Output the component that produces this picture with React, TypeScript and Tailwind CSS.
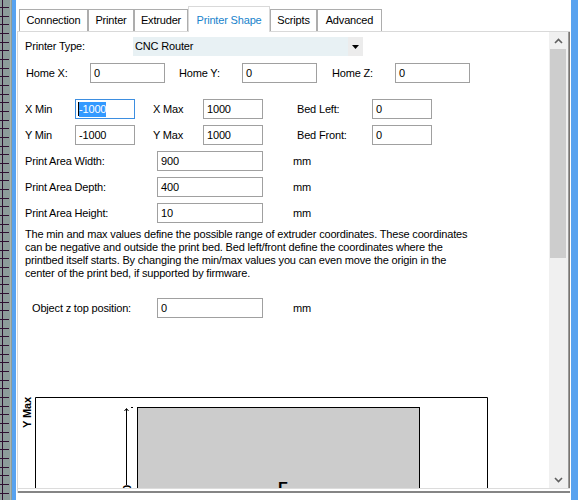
import React from 'react';

// Printer settings dialog, "Printer Shape" tab

const TABS = [
  { label: 'Connection', w: 'w-[69px]' },
  { label: 'Printer', w: 'w-[46px]' },
  { label: 'Extruder', w: 'w-[54px]' },
  { label: 'Printer Shape', w: 'w-[82px]', active: true },
  { label: 'Scripts', w: 'w-[47px]' },
  { label: 'Advanced', w: 'w-[65px]' },
];

const DESCRIPTION = [
  'The min and max values define the possible range of extruder coordinates. These coordinates',
  'can be negative and outside the print bed. Bed left/front define the coordinates where the',
  'printbed itself starts. By changing the min/max values you can even move the origin in the',
  'center of the print bed, if supported by firmware.',
];

function GridStrip() {
  const rows = Array.from({ length: 58 }, (_, i) => Math.round(7 + i * 8.67) + 0.5);
  return (
    <svg width="12" height="500" className="shrink-0 block">
      <rect width="12" height="500" fill="#8d9d9b" />
      <line x1="2.5" y1="0" x2="2.5" y2="500" stroke="#2e1030" />
      {rows.map((y) => (
        <line key={y} x1="0" y1={y} x2="9" y2={y} stroke="#2e1030" />
      ))}
      <line x1="10.5" y1="0" x2="10.5" y2="500" stroke="#a9b6b4" />
    </svg>
  );
}

function Input({ width, value }: { width: string; value: string }) {
  return (
    <div className={`${width} h-[20px] shrink-0 border border-[#a0a0a0] bg-white pl-[3px] flex items-center`}>
      {value}
    </div>
  );
}

function Label({ width, children }: { width: string; children: React.ReactNode }) {
  return <div className={`${width} shrink-0`}>{children}</div>;
}

function ScrollBar() {
  return (
    <div className="w-[18px] shrink-0 bg-[#f0f0f0] flex flex-col">
      <div className="h-[17px] flex items-center justify-center">
        <svg width="9" height="6">
          <path d="M1 5 L4.5 1.5 L8 5" fill="none" stroke="#606060" strokeWidth="1.6" />
        </svg>
      </div>
      <div className="h-[209px] mx-[1px] bg-[#cdcdcd]" />
      <div className="flex-1" />
      <div className="h-[17px] flex items-center justify-center">
        <svg width="9" height="6">
          <path d="M1 1 L4.5 4.5 L8 1" fill="none" stroke="#606060" strokeWidth="1.6" />
        </svg>
      </div>
    </div>
  );
}

function ShapeDiagram() {
  return (
    <svg width="480" height="110" className="block shrink-0 mt-[72px]">
      <text
        transform="translate(13,22.5) rotate(-90)"
        textAnchor="middle"
        fontSize="11"
        fontWeight="bold"
        fontFamily="Liberation Sans, Arial, sans-serif"
        fill="#000"
      >
        Y Max
      </text>
      <path d="M17.5 110 V7.5 H469.5 V110" fill="none" stroke="#000" />
      <rect x="119.5" y="17.5" width="282" height="100" fill="#cccccc" stroke="#000" />
      <line x1="108.5" y1="19" x2="108.5" y2="95" stroke="#000" />
      <path d="M106.5 21 L108.5 18.5 L110.5 21" fill="none" stroke="#000" />
      <line x1="113" y1="17.5" x2="115" y2="17.5" stroke="#000" />
      <text
        transform="translate(113,101) rotate(-90)"
        fontSize="11"
        fontWeight="bold"
        fontFamily="Liberation Sans, Arial, sans-serif"
        fill="#000"
      >
        0
      </text>
      <text x="260" y="104" fontSize="16" fontWeight="bold" fontFamily="Liberation Sans, Arial, sans-serif" fill="#000">
        F
      </text>
    </svg>
  );
}

export default function App() {
  return (
    <div className="w-[585px] h-[500px] overflow-hidden flex bg-white font-['Liberation_Sans',Arial,sans-serif] text-[11px] tracking-[-0.17px] text-black">
      <GridStrip />
      <div className="w-[4px] shrink-0 bg-[#58a2ef]" />

      {/* dialog window */}
      <div className="w-[555px] shrink-0 flex flex-col bg-white">
        {/* tab strip */}
        <div className="h-[26px] mt-[6px] -mb-px ml-[3px] flex items-end relative z-10">
          {TABS.map((tab) =>
            tab.active ? (
              <div
                key={tab.label}
                className={`${tab.w} h-[26px] shrink-0 bg-white border-t border-x border-[#d9d9d9] flex items-start justify-center pt-[5px] text-[#1883cc]`}
              >
                {tab.label}
              </div>
            ) : (
              <div
                key={tab.label}
                className={`${tab.w} h-[22px] mb-px shrink-0 bg-white border-t border-x border-[#adadad] flex items-center justify-center`}
              >
                {tab.label}
              </div>
            )
          )}
        </div>

        {/* tab page */}
        <div className="ml-[1px] w-[553px] h-[462px] border-t border-l border-[#d9d9d9] flex flex-col">
          <div className="flex h-[456px]">
            <div className="flex-1 overflow-hidden pl-[7px] flex flex-col">
              {/* printer type */}
              <div className="flex items-center h-[19px] mt-[5px]">
                <Label width="w-[108px]">Printer Type:</Label>
                <div className="w-[230px] h-[19px] flex bg-[#e8f1f4]">
                  <div className="flex-1 flex items-center pl-[2px]">CNC Router</div>
                  <div className="w-[15px] bg-[#ececec] flex items-center justify-center">
                    <svg width="7" height="4">
                      <path d="M0 0 H7 L3.5 4 Z" fill="#000" />
                    </svg>
                  </div>
                </div>
              </div>

              {/* home position */}
              <div className="flex items-center mt-[7px]">
                <Label width="w-[65px] pl-px">Home X:</Label>
                <Input width="w-[75px]" value="0" />
                <Label width="w-[63px] ml-[14px]">Home Y:</Label>
                <Input width="w-[75px]" value="0" />
                <Label width="w-[63px] ml-[15px]">Home Z:</Label>
                <Input width="w-[75px]" value="0" />
              </div>

              {/* x range */}
              <div className="flex items-center mt-[16px]">
                <Label width="w-[50px]">X Min</Label>
                <div className="w-[60px] h-[20px] shrink-0 border border-[#3d8ee0] bg-white pl-[2px] flex items-center">
                  <span className="w-px h-[14px] bg-black" />
                  <span className="bg-[#3399ff] text-white leading-[15px]">-1000</span>
                </div>
                <Label width="w-[50px] ml-[18px]">X Max</Label>
                <Input width="w-[60px]" value="1000" />
                <Label width="w-[75px] ml-[34px]">Bed Left:</Label>
                <Input width="w-[60px]" value="0" />
              </div>

              {/* y range */}
              <div className="flex items-center mt-[6px]">
                <Label width="w-[50px]">Y Min</Label>
                <Input width="w-[60px]" value="-1000" />
                <Label width="w-[50px] ml-[18px]">Y Max</Label>
                <Input width="w-[60px]" value="1000" />
                <Label width="w-[75px] ml-[34px]">Bed Front:</Label>
                <Input width="w-[60px]" value="0" />
              </div>

              {/* print area */}
              {[
                ['Print Area Width:', '900'],
                ['Print Area Depth:', '400'],
                ['Print Area Height:', '10'],
              ].map(([label, value]) => (
                <div key={label} className="flex items-center mt-[6px]">
                  <Label width="w-[132px]">{label}</Label>
                  <Input width="w-[106px]" value={value} />
                  <div className="ml-[30px]">mm</div>
                </div>
              ))}

              <div className="mt-[5px] leading-[13px] whitespace-nowrap">
                {DESCRIPTION.map((line) => (
                  <div key={line}>{line}</div>
                ))}
              </div>

              <div className="flex items-center mt-[18px]">
                <Label width="w-[125px] ml-[7px]">Object z top position:</Label>
                <Input width="w-[106px]" value="0" />
                <div className="ml-[30px]">mm</div>
              </div>

              <div className="-ml-[7px]">
                <ShapeDiagram />
              </div>
            </div>
            <ScrollBar />
            <div className="w-px bg-[#f0f0f0]" />
            <div className="w-px bg-[#9a9a9a]" />
            <div className="w-px bg-[#7a7570]" />
          </div>
          <div className="h-px bg-[#dcdcdc]" />
          <div className="h-[2px]" />
          <div className="h-[2px] bg-[#858585]" />
        </div>
      </div>

      <div className="w-[7px] shrink-0 bg-[#58a2ef]" />
      <div className="flex-1 bg-white" />
    </div>
  );
}
